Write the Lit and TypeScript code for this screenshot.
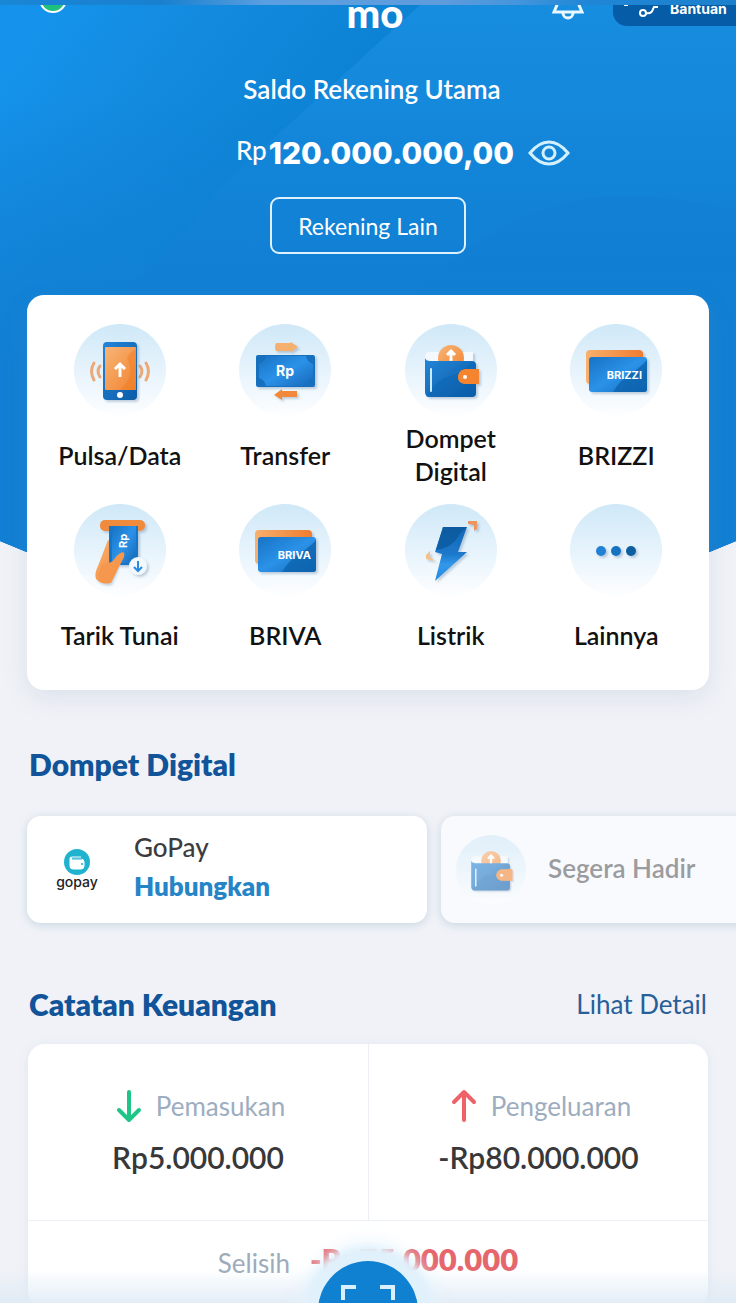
import { LitElement, html, svg, css } from "lit";
import { customElement } from "lit/decorators.js";

const phone = svg`
  <g fill="none" stroke="#eda878" stroke-width="3" stroke-linecap="round">
    <path d="M26 42q-4 5 0 11M20 39q-5 8 0 17M66 42q4 5 0 11M72 39q5 8 0 17"/>
  </g>
  <g filter="url(#soft)">
    <rect x="29" y="18" width="34" height="58" rx="4" fill="url(#blueDeep)"/>
    <rect x="31" y="23" width="31" height="43" rx="1" fill="url(#orange)"/>
  </g>
  <path d="M62 25v41H46Q62 52 53 34Q56 28 62 25Z" fill="#f07d24" opacity=".5"/>
  <circle cx="46" cy="71" r="3" fill="#fff"/>
  <path d="M46 53V42M41 45l5-5 5 5" fill="none" stroke="#fff" stroke-width="3"/>
`;

const transfer = svg`
  <g filter="url(#soft)">
    <path d="M37 19h14l1-1 7 5-7 5-1-1H37q-2-4 0-8Z" fill="#f5b070"/>
    <rect x="17" y="31" width="59" height="32" rx="2" fill="#1370bd"/>
    <path d="M58 67H43v-2l-8 6 8 5v-3h15Z" fill="#f1883a"/>
  </g>
  <path d="M27 32h40q1 6 7 8v14q-6 2-7 8H27q-1-6-7-8V40q6-2 7-8Z" fill="url(#blue)"/>
  <text x="46" y="52" text-anchor="middle" class="mark mark-rp">Rp</text>
`;

const wallet = svg`
  <g filter="url(#soft)">
    <path d="M20 33q0-5 5-5h43v14H20Z" fill="#f4f9fd"/>
    <circle cx="46" cy="34" r="13" fill="url(#orange)"/>
    <path d="M20 34q1 3 5 3h42q4 0 4 4v28q0 4-4 4H25q-5 0-5-5Z" fill="url(#blueDeep)"/>
    <path d="M60 45h14v15H60q-7-1-7-7t7-8Z" fill="#f5842f"/>
  </g>
  <path d="M46 37v-8M42 31l4-4 4 4" fill="none" stroke="#fff" stroke-width="3"/>
  <path d="M21 73Q32 55 43 53T66 38h3q2 1 2 5v26q0 4-4 4Z" fill="#0a5eab" opacity=".35"/>
  <path d="M60 45h14v15H60q-7-1-7-7t7-8Z" fill="#f5842f"/>
  <path d="M26 45v22" stroke="#cdebff" stroke-width="2" stroke-linecap="round"/>
  <circle cx="60" cy="53" r="2" fill="#fff"/>
`;

const bankCard = (name: string) => svg`
  <g filter="url(#soft)">
    <rect x="16" y="26" width="57" height="34" rx="4" fill="url(#orangeFlat)"/>
    <rect x="19" y="33" width="58" height="35" rx="3" fill="url(#blue)"/>
  </g>
  <path d="M43 68Q50 56 60 50T77 36v29q0 3-3 3Z" fill="#0b62ab" opacity=".75"/>
  <text x="72" y="55" text-anchor="end" class="mark mark-card">${name}</text>
`;

const cashOut = svg`
  <g filter="url(#soft)">
    <rect x="26" y="16" width="45" height="11" rx="5" fill="#f08a3e"/>
    <path d="M34 36L24 62q-4 8-2 13 6 6 14 4l6-14 4-20Z" fill="url(#orange)"/>
    <path d="M35 22h29v36q-3 0-4 3H36l-1-4Z" fill="#1675c4"/>
  </g>
  <path d="M38 22h24v34q-3 1-4 3H39l-1-2Z" fill="url(#blue)"/>
  <path d="M28 60Q38 60 41 54q4-5 8-6 2 1 1 5L37 79q-12 0-13-8Z" fill="#f5984e"/>
  <text transform="translate(53 44) rotate(-90)" class="mark mark-note">Rp</text>
  <circle cx="64" cy="62" r="9" fill="#f2f8fe" filter="url(#soft)"/>
  <path d="M64 57v10M60 63l4 4 4-4" fill="none" stroke="#2b8be0" stroke-width="2"/>
`;

const bolt = svg`
  <g filter="url(#soft)">
    <path d="M63 17h9v8l-3 2v-6l-6-1Z" fill="#ee9460"/>
    <path d="M25 47l-4 4v4l9 2-5-4Z" fill="#f5c08c"/>
    <path d="M38 23h24l-9 25h9L30 77l7-27-7-2Z" fill="url(#bolt)"/>
  </g>
  <path d="M38 23h24l-7 6Q48 44 31 46Z" fill="#0a5799" opacity=".7"/>
`;

const dots = svg`
  <g filter="url(#soft)">
    <circle cx="31" cy="47" r="5" fill="#2381d3"/>
    <circle cx="46" cy="47" r="5" fill="#1873c2"/>
    <circle cx="61" cy="47" r="5" fill="#0c5f9f"/>
  </g>
`;

const badge = (art: unknown, cls = "badge") => html`
  <svg class=${cls} viewBox="0 0 92 92" aria-hidden="true">
    <circle cx="46" cy="46" r="46" fill="url(#disc)"/>${art}
  </svg>`;

const menu = [
  { label: "Pulsa/Data", art: phone },
  { label: "Transfer", art: transfer },
  { label: "Dompet Digital", art: wallet },
  { label: "BRIZZI", art: bankCard("BRIZZI") },
  { label: "Tarik Tunai", art: cashOut },
  { label: "BRIVA", art: bankCard("BRIVA") },
  { label: "Listrik", art: bolt },
  { label: "Lainnya", art: dots },
];

@customElement("app-root")
export class AppRoot extends LitElement {
  static styles = css`
    :host {
      display: block;
      font-family: Lato, "Open Sans", sans-serif;
      color: #111;
    }
    * { box-sizing: border-box; }
    button { font: inherit; color: inherit; background: none; border: 0; padding: 0; cursor: pointer; }
    a { text-decoration: none; }
    h2, p { margin: 0; }
    svg { display: block; overflow: visible; }

    .defs { position: absolute; width: 0; height: 0; }
    .screen {
      position: relative;
      display: flex;
      flex-direction: column;
      height: 100vh;
      overflow: hidden;
      background: #f0f2f7;
    }
    .strip-top {
      position: relative;
      z-index: 3;
      flex: none;
      height: 5px;
      background: linear-gradient(90deg, #1a86d6, #1880cf 22%, #5a9fe0 36%, #5f9cdc 60%, #4596dd 70%, #1f86d6 80%, #1c80cc);
    }
    .strip-bottom { flex: none; height: 5px; background: #fff; position: relative; z-index: 3; }
    .content {
      position: relative;
      flex: 1;
      min-height: 0;
    }
    .backdrop {
      position: absolute;
      inset: 0 0 auto 0;
      width: 100%;
      height: 612px;
      clip-path: polygon(0 0, 100% 0, 100% 536px, 75% 612px, 25% 612px, 0 536px);
    }

    .top {
      position: relative;
      display: grid;
      grid-template-columns: 1fr auto 1fr;
      grid-template-rows: 21px;
      align-items: end;
      color: #fff;
    }
    .status {
      width: 28px;
      height: 28px;
      margin: 0 0 13px 39px;
      border: 2px solid #fff;
      border-radius: 50%;
      background: #1fc07c;
    }
    .logo { padding-left: 14px; font-weight: 900; font-size: 40px; line-height: 26px; }
    .tools { display: flex; justify-content: flex-end; align-items: flex-end; gap: 29px; }
    .bell { width: 32px; height: 32px; margin-bottom: 7px; }
    .help {
      display: flex;
      align-items: flex-end;
      gap: 10px;
      width: 123px;
      height: 38px;
      padding: 0 0 9px 13px;
      border-radius: 14px 0 0 14px;
      background: #065ca6;
      font-family: Inter, sans-serif;
      font-weight: 700;
      font-size: 14px;
      line-height: 16px;
    }

    .balance {
      position: relative;
      display: flex;
      flex-direction: column;
      align-items: center;
      padding-top: 45px;
      color: #fff;
    }
    .caption { padding-left: 8px; font-weight: 600; font-size: 26px; line-height: 36px; }
    .amount-row {
      display: grid;
      grid-template-columns: 1fr auto 1fr;
      align-items: center;
      width: 100%;
      margin-top: 27px;
      padding-left: 14px;
    }
    .amount {
      grid-column: 2;
      display: flex;
      align-items: flex-start;
      gap: 2px;
      font-family: Inter, sans-serif;
      font-weight: 800;
      font-size: 30px;
      line-height: 38px;
    }
    .currency { font-family: Lato, sans-serif; font-weight: 500; font-size: 26px; line-height: 32px; }
    .eye { justify-self: start; margin-left: 14px; }
    .other {
      margin-top: 25px;
      padding: 0 26px;
      height: 57px;
      border: 2px solid #dff1ff;
      border-radius: 9px;
      font-size: 23px;
    }

    .menu {
      position: relative;
      display: grid;
      grid-template-columns: repeat(4, 1fr);
      row-gap: 16px;
      margin: 41px 27px 0;
      padding: 29px 10px 22px;
      border-radius: 17px;
      background: #fff;
      box-shadow: 0 8px 24px rgba(120, 140, 180, .16);
    }
    .item { display: flex; flex-direction: column; align-items: center; gap: 6px; }
    .badge { width: 92px; height: 92px; }
    .label {
      display: flex;
      align-items: center;
      justify-content: center;
      height: 66px;
      max-width: 140px;
      font-weight: 600;
      font-size: 25px;
      line-height: 33px;
    }

    .mark { fill: #fff; font-family: Inter, sans-serif; font-weight: 700; }
    .mark-rp { font-size: 14px; }
    .mark-note { font-size: 11px; }
    .mark-card { font-size: 11px; }

    .section-head {
      display: flex;
      align-items: center;
      justify-content: space-between;
      margin: 55px 29px 0;
    }
    .title { font-weight: 800; font-size: 30px; line-height: 38px; color: #11549a; }
    .more { font-size: 26px; line-height: 38px; color: #285f98; }

    .wallets { display: flex; gap: 14px; padding: 33px 0 8px 27px; }
    .wallet {
      flex: none;
      display: flex;
      align-items: center;
      width: 400px;
      height: 107px;
      border-radius: 14px;
      background: #fff;
      box-shadow: 0 2px 8px rgba(130, 165, 190, .36);
    }
    .gopay { width: 50px; margin: 0 32px 0 25px; }
    .gopay-mark { fill: #222; font-family: Inter, sans-serif; font-weight: 500; font-size: 14px; }
    .wallet-text { padding-bottom: 6px; line-height: 39px; }
    .wallet-name { font-weight: 500; font-size: 26px; color: #3c3c3e; }
    .connect { display: block; font-weight: 800; font-size: 26px; color: #2685c7; }
    .soon { background: #f9fafd; color: #9b9ca0; font-weight: 600; font-size: 26px; line-height: 39px; gap: 22px; padding-left: 15px; }
    .soon-text { padding-bottom: 3px; }
    .badge-small { width: 70px; height: 70px; opacity: .58; }

    .wallets + .section-head { margin-top: 54px; }
    .report {
      margin: 21px 28px 0;
      border-radius: 17px;
      background: #fff;
      box-shadow: 0 2px 12px rgba(150, 175, 205, .16);
    }
    .flows { display: grid; grid-template-columns: 1fr 1fr; border-bottom: 1px solid #eceff3; }
    .flow { display: flex; flex-direction: column; align-items: center; gap: 10px; height: 176px; padding-top: 42px; }
    .flow + .flow { border-left: 1px solid #eceff3; }
    .flow-name { display: flex; align-items: center; gap: 15px; padding-left: 6px; font-size: 26px; line-height: 40px; color: #9dadc0; }
    .flow-sum { font-weight: 600; font-size: 30px; line-height: 42px; color: #38383a; }
    .net { display: flex; justify-content: center; gap: 20px; height: 88px; padding-top: 22px; font-size: 26px; line-height: 40px; color: #9dabba; }
    .net-sum { font-weight: 800; font-size: 31px; line-height: 32px; color: #e5666c; }

    .dock {
      position: absolute;
      inset: auto 0 5px 0;
      height: 48px;
      background: linear-gradient(rgba(225, 236, 247, 0) 30%, rgba(222, 234, 245, .85));
    }
    .scan {
      position: absolute;
      left: 50%;
      top: 6px;
      width: 100px;
      height: 100px;
      margin-left: -50px;
      border-radius: 50%;
      background: #1080d0;
      box-shadow: 0 0 6px 14px #e0f1fc, 0 0 18px 18px rgba(228, 243, 253, .9);
    }
    .scan-icon { position: absolute; left: 23px; top: 24px; }
  `;

  render() {
    return html`
      <svg class="defs" aria-hidden="true">
        <defs>
          <linearGradient id="disc" x1="0" y1="0" x2="0" y2="1">
            <stop offset="0" stop-color="#cfe8f7"/><stop offset=".5" stop-color="#e6f3fc"/><stop offset="1" stop-color="#fdfeff"/>
          </linearGradient>
          <linearGradient id="blue" x1="0" y1="0" x2="1" y2="1">
            <stop offset="0" stop-color="#1872c4"/><stop offset=".5" stop-color="#2b92e8"/><stop offset="1" stop-color="#1568b8"/>
          </linearGradient>
          <linearGradient id="blueDeep" x1="0" y1="0" x2="1" y2="1">
            <stop offset="0" stop-color="#2485d8"/><stop offset="1" stop-color="#0b5ca6"/>
          </linearGradient>
          <linearGradient id="orange" x1="0" y1="0" x2="1" y2="1">
            <stop offset="0" stop-color="#f8b577"/><stop offset="1" stop-color="#f28330"/>
          </linearGradient>
          <linearGradient id="orangeFlat">
            <stop offset="0" stop-color="#f8b06c"/><stop offset="1" stop-color="#ef7c30"/>
          </linearGradient>
          <linearGradient id="bolt" x1="0" y1="0" x2="0" y2="1">
            <stop offset="0" stop-color="#1467b5"/><stop offset=".5" stop-color="#1c78cb"/><stop offset=".7" stop-color="#3398ea"/><stop offset="1" stop-color="#2489dc"/>
          </linearGradient>
          <filter id="soft" x="-20%" y="-20%" width="150%" height="150%">
            <feDropShadow dx="2" dy="2" stdDeviation="1" flood-color="#4a6a90" flood-opacity=".3"/>
          </filter>
        </defs>
      </svg>
      <div class="screen">
        <div class="strip-top"></div>
        <main class="content">
          <svg class="backdrop" viewBox="0 0 736 612" preserveAspectRatio="none" aria-hidden="true">
            <defs>
              <linearGradient id="sky" gradientUnits="userSpaceOnUse" x1="0" y1="60" x2="240" y2="240">
                <stop offset="0" stop-color="#1593ec"/><stop offset=".45" stop-color="#138ade"/><stop offset="1" stop-color="#0c82d3"/>
              </linearGradient>
              <linearGradient id="facet" gradientUnits="userSpaceOnUse" x1="480" y1="0" x2="480" y2="540">
                <stop offset="0" stop-color="#178ddf"/><stop offset=".5" stop-color="#1182d6"/><stop offset="1" stop-color="#137dd2"/>
              </linearGradient>
              <linearGradient id="depth" x1="0" y1="0" x2="0" y2="1">
                <stop offset=".15" stop-color="#117fd3" stop-opacity="0"/><stop offset=".6" stop-color="#117fd3"/>
              </linearGradient>
            </defs>
            <rect width="736" height="612" fill="url(#sky)"/>
            <path d="M420 0H736V612H0V400Q160 260 225 178Z" fill="url(#facet)"/>
            <path d="M400 300Q480 225 550 202T736 205V612H250Z" fill="#0f7bd0" opacity=".3"/>
            <rect width="736" height="612" fill="url(#depth)"/>
          </svg>

          <header class="top">
            <div class="status"></div>
            <div class="logo">mo</div>
            <div class="tools">
              <button aria-label="Notifikasi">
                <svg class="bell" viewBox="0 0 32 32" fill="none" stroke="#e9f7ff" stroke-width="3">
                  <path d="M2 25h28L27 18V12a11 11 0 0 0-22 0v6ZM11 26a5 5 0 0 0 10 0"/>
                </svg>
              </button>
              <button class="help">
                <svg width="34" height="16" viewBox="0 0 34 16" fill="none" stroke="#fff" stroke-width="2" aria-hidden="true">
                  <circle cx="17" cy="12" r="3"/><path d="M20 12q6 1 7-4l1-2h4M-2 4h4"/>
                </svg>
                Bantuan
              </button>
            </div>
          </header>

          <section class="balance">
            <p class="caption">Saldo Rekening Utama</p>
            <div class="amount-row">
              <p class="amount"><span class="currency">Rp</span>120.000.000,00</p>
              <button class="eye" aria-label="Sembunyikan saldo">
                <svg width="42" height="26" viewBox="0 0 42 26" fill="none" stroke="#d3f0ff" stroke-width="3">
                  <path d="M2 13Q11 2 21 2t19 11Q31 24 21 24T2 13Z"/><circle cx="21" cy="13" r="6"/>
                </svg>
              </button>
            </div>
            <button class="other">Rekening Lain</button>
          </section>

          <nav class="menu">
            ${menu.map((m) => html`
              <button class="item">${badge(m.art)}<span class="label">${m.label}</span></button>`)}
          </nav>

          <div class="section-head"><h2 class="title">Dompet Digital</h2></div>
          <section class="wallets">
            <article class="wallet">
              <svg class="gopay" viewBox="0 0 50 46" aria-hidden="true">
                <circle cx="25" cy="15" r="13" fill="#1fb3d0"/>
                <path d="M19 10q-1 0-1 2v7q0 3 3 3h8q3 0 3-3v-4q0-3-3-3H20q-2-2 0-2h9" fill="#fff" stroke="#fff"/>
                <path d="M20 12h10" stroke="#1fb3d0"/><circle cx="30" cy="17" r="1" fill="#1fb3d0"/>
                <text x="25" y="40" text-anchor="middle" class="gopay-mark">gopay</text>
              </svg>
              <div class="wallet-text">
                <p class="wallet-name">GoPay</p>
                <a class="connect" href="#gopay">Hubungkan</a>
              </div>
            </article>
            <article class="wallet soon">${badge(wallet, "badge-small")}<span class="soon-text">Segera Hadir</span></article>
          </section>

          <div class="section-head">
            <h2 class="title">Catatan Keuangan</h2>
            <a class="more" href="#detail">Lihat Detail</a>
          </div>
          <section class="report">
            <div class="flows">
              ${this.flow("Pemasukan", "Rp5.000.000", true)}
              ${this.flow("Pengeluaran", "-Rp80.000.000", false)}
            </div>
            <div class="net">Selisih <span class="net-sum">-Rp75.000.000</span></div>
          </section>
        </main>

        <div class="dock">
          <button class="scan" aria-label="Pindai QR">
            <svg class="scan-icon" width="54" height="54" viewBox="0 0 54 54" fill="none" stroke="#d9f0ff" stroke-width="4">
              <path d="M2 15V2h13M39 2h13v13M52 39v13H39M15 52H2V39"/>
            </svg>
          </button>
        </div>
        <div class="strip-bottom"></div>
      </div>
    `;
  }

  private flow(name: string, sum: string, income: boolean) {
    return html`
      <div class="flow">
        <div class="flow-name">
          <svg width="24" height="34" viewBox="0 0 24 34" fill="none" stroke-width="4" stroke-linecap="round" stroke-linejoin="round"
            stroke=${income ? "#1fc487" : "#ee6368"} aria-hidden="true">
            <path d=${income ? "M12 3v28M2 21l10 10 10-10" : "M12 31V3M2 13L12 3l10 10"}/>
          </svg>
          ${name}
        </div>
        <p class="flow-sum">${sum}</p>
      </div>`;
  }
}
